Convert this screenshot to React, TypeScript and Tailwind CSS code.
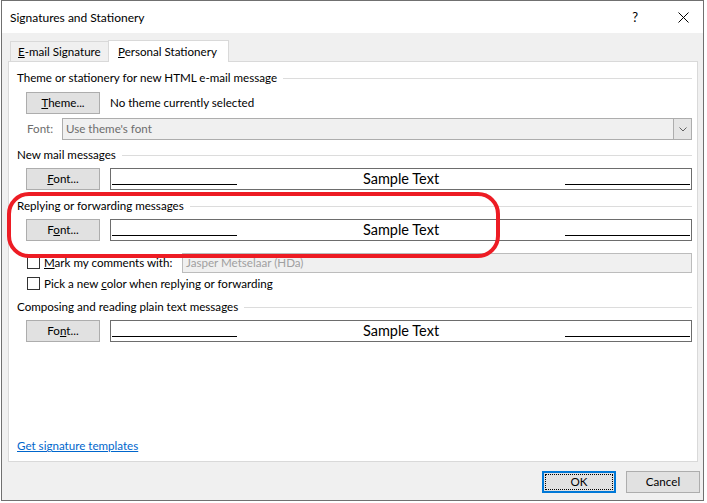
import React from 'react'

function Header({ children }: { children: React.ReactNode }) {
  return (
    <div className="flex items-center h-[16px]">
      <span className="whitespace-nowrap">{children}</span>
      <div className="flex-1 h-px bg-[#dcdcdc] ml-[6px]" />
    </div>
  )
}

function Btn({ children, className = '' }: { children: React.ReactNode; className?: string }) {
  return (
    <div
      className={`w-[74px] h-[22px] shrink-0 bg-[#e1e1e1] border border-[#adadad] flex items-center justify-center ${className}`}
    >
      {children}
    </div>
  )
}

function Sample() {
  return (
    <div className="flex-1 h-[22px] border border-[#6d6d6d] bg-white relative flex items-center justify-center">
      <div className="absolute left-[1px] top-[15px] w-[125px] h-px bg-black" />
      <span className="text-[14.5px] leading-none">Sample Text</span>
      <div className="absolute right-[1px] top-[15px] w-[125px] h-px bg-black" />
    </div>
  )
}

function FontRow({ label }: { label: React.ReactNode }) {
  return (
    <div className="flex pl-[9px] gap-[10px]">
      <Btn>{label}</Btn>
      <Sample />
    </div>
  )
}

function Check({ children }: { children: React.ReactNode }) {
  return (
    <div className="flex items-center">
      <div className="w-[13px] h-[13px] border border-[#333333] bg-white shrink-0 ml-[10px]" />
      <span className="ml-[4px] whitespace-nowrap">{children}</span>
    </div>
  )
}

export default function App() {
  return (
    <div className="w-[707px] h-[503px] bg-white relative overflow-hidden font-['Lato',sans-serif] text-[11.6px] text-black">
      <div className="ml-px w-[703px] h-[501px] border border-[#707070] bg-[#f0f0f0] flex flex-col">
        {/* title bar */}
        <div className="h-[32px] bg-white flex items-center pl-[8px] shrink-0 text-[12px]">
          <span className="mt-[2px]">Signatures and Stationery</span>
          <span className="ml-auto mt-[2px] text-[13px]">?</span>
          <svg className="ml-[40px] mr-[14px] mt-[1px]" width="11" height="11" viewBox="0 0 11 11">
            <path d="M0.5 0.5 L10.5 10.5 M10.5 0.5 L0.5 10.5" stroke="#000" strokeWidth="1" />
          </svg>
        </div>

        {/* tabs */}
        <div className="flex items-end pt-[7px] pl-[8px] h-[28px] shrink-0">
          <div className="h-[21px] w-[98px] border border-b-0 border-r-0 border-[#d9d9d9] flex items-center pl-[7px] mb-[-1px]">
            <span>
              <span className="underline">E</span>-mail Signature
            </span>
          </div>
          <div className="h-[22px] w-[121px] border border-b-0 border-[#d9d9d9] bg-white flex items-center pl-[9px] mb-[-1px] relative z-10">
            <span>
              <span className="underline">P</span>ersonal Stationery
            </span>
          </div>
        </div>

        {/* panel */}
        <div className="ml-[6px] mr-[5px] h-[401px] bg-white border border-[#d9d9d9] flex flex-col pl-[8px] pr-[5px] pt-[8px] pb-[7px] shrink-0">
          <Header>Theme or stationery for new HTML e-mail message</Header>
          <div className="flex items-center pl-[9px] mt-[6px]">
            <Btn className="h-[21px]">
              <span>
                <span className="underline">T</span>heme...
              </span>
            </Btn>
            <span className="ml-[10px]">No theme currently selected</span>
          </div>
          <div className="flex items-center mt-[4px]">
            <span className="ml-[10px] text-[#6d6d6d] w-[35px]">Font:</span>
            <div className="flex-1 h-[22px] border border-[#adadad] bg-[#f0f0f0] flex items-center">
              <span className="ml-[3px] text-[#6d6d6d]">Use theme's font</span>
              <div className="ml-auto w-[18px] h-full border-l border-[#adadad] bg-[#e5e5e5] flex items-center justify-center">
                <svg width="8" height="5" viewBox="0 0 8 5">
                  <path d="M0.5 0.5 L4 4 L7.5 0.5" stroke="#606060" strokeWidth="1" fill="none" />
                </svg>
              </div>
            </div>
          </div>

          <div className="mt-[7px]">
            <Header>New mail messages</Header>
          </div>
          <div className="mt-[5px]">
            <FontRow
              label={
                <span>
                  <span className="underline">F</span>ont...
                </span>
              }
            />
          </div>

          <div className="mt-[8px]">
            <Header>Replying or forwarding messages</Header>
          </div>
          <div className="mt-[5px]">
            <FontRow
              label={
                <span>
                  F<span className="underline">o</span>nt...
                </span>
              }
            />
          </div>

          <div className="flex items-center mt-[12px] h-[20px]">
            <div className="w-[165px] shrink-0">
              <Check>
                <span className="underline">M</span>ark my comments with:
              </Check>
            </div>
            <div className="flex-1 h-[20px] border border-[#bcbcbc] bg-[#f0f0f0] flex items-center">
              <span className="ml-[3px] text-[#a0a0a0]">Jasper Metselaar (HDa)</span>
            </div>
          </div>
          <div className="h-[18px] mt-[2px] flex items-center">
            <Check>
              Pick a new <span className="underline">c</span>olor when replying or forwarding
            </Check>
          </div>

          <div className="mt-[6px]">
            <Header>Composing and reading plain text messages</Header>
          </div>
          <div className="mt-[5px]">
            <FontRow
              label={
                <span>
                  Fo<span className="underline">n</span>t...
                </span>
              }
            />
          </div>

          <div className="mt-auto h-[16px] flex items-center">
            <span className="text-[#0066cc] underline">Get signature templates</span>
          </div>
        </div>

        {/* footer */}
        <div className="flex justify-end gap-[10px] pr-[3px] pt-[9px]">
          <div className="w-[74px] h-[22px] border-2 border-[#0078d7] bg-[#e1e1e1] p-px">
            <div className="w-full h-full border border-dotted border-black flex items-center justify-center">
              OK
            </div>
          </div>
          <Btn>Cancel</Btn>
        </div>
      </div>

      {/* red highlight annotation */}
      <div className="absolute left-[7px] top-[192px] w-[493px] h-[66px] border-4 border-[#ed1c24] rounded-[22px] pointer-events-none" />
    </div>
  )
}
